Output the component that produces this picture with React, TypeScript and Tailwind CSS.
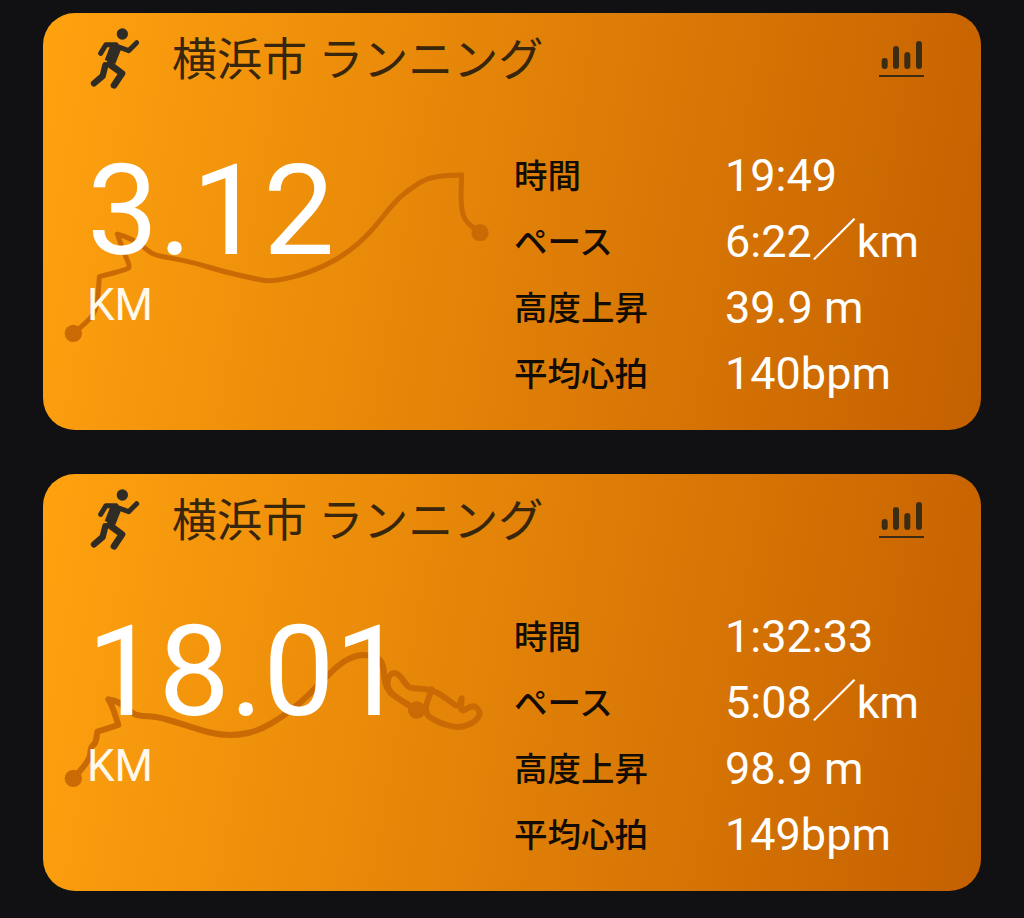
const jp = "font-['Roboto','Noto_Sans_CJK_JP',sans-serif]";

type P = [number, number];

const route1: P[] = [
  [100, 970], [150, 930], [172, 890], [178, 800], [178, 800], [262, 778], [270, 770], [255, 735], [240, 695], [232, 672], [232, 672], [270, 685], [310, 710], [340, 735], [400, 745], [470, 760], [550, 785], [640, 805], [690, 815], [770, 800], [850, 770], [920, 730], [990, 670], [1060, 580], [1105, 540], [1160, 505], [1210, 497], [1265, 495], [1265, 495], [1262, 570], [1270, 630], [1320, 668],
];
const route2: P[] = [
  [100, 535], [150, 482], [152, 440], [167, 430], [172, 395], [172, 395], [235, 375], [235, 375], [218, 322], [205, 298], [205, 298], [235, 305], [272, 335], [292, 348], [350, 350], [420, 370], [480, 390], [540, 405], [600, 405], [660, 390], [720, 355], [780, 310], [840, 250], [900, 190], [950, 165], [990, 165], [1030, 180], [1035, 270], [1090, 305], [1130, 330], [1040, 275], [1045, 225], [1070, 215], [1100, 255], [1110, 265], [1175, 268], [1220, 295], [1255, 325], [1265, 295], [1265, 295], [1262, 340], [1300, 312], [1325, 340], [1300, 370], [1250, 385], [1190, 365], [1150, 338], [1175, 268],
];

function smooth(p: P[]) {
  let d = `M${p[0][0]} ${p[0][1]}`;
  for (let i = 1; i < p.length - 1; i++) {
    const mx = (p[i][0] + p[i + 1][0]) / 2;
    const my = (p[i][1] + p[i + 1][1]) / 2;
    d += ` Q${p[i][0]} ${p[i][1]} ${mx} ${my}`;
  }
  const l = p[p.length - 1];
  return d + ` L${l[0]} ${l[1]}`;
}

function Runner() {
  return (
    <svg width="70" height="75" viewBox="0 0 210 225" fill="none" stroke="#2f2b25" strokeLinecap="round" strokeLinejoin="round" className="mt-[-3px]">
      <circle cx="127" cy="42" r="17" fill="#2f2b25" stroke="none" />
      <path d="M108 78 L146 92 L170 68" strokeWidth="15" />
      <path d="M108 74 L78 74 L62 100" strokeWidth="15" />
      <path d="M108 80 L90 126" strokeWidth="34" strokeLinecap="butt" />
      <path d="M88 132 L126 160 L102 196" strokeWidth="20" />
      <path d="M76 136 L68 168 L42 190" strokeWidth="19" />
    </svg>
  );
}

function Bars() {
  return (
    <svg width="45" height="36" viewBox="0 0 45 36" fill="#3d2c14">
      <rect x="2.7" y="17" width="6" height="11" rx="3" />
      <rect x="14" y="5" width="6" height="23" rx="3" />
      <rect x="25.3" y="11" width="6" height="17" rx="3" />
      <rect x="37" y="0" width="6" height="28" rx="3" />
      <rect x="0" y="34" width="45" height="2.6" />
    </svg>
  );
}

function Card({
  distance,
  pts,
  viewBox,
  svgW,
  svgH,
  svgTop,
  end,
  stroke,
  stats,
}: {
  distance: string;
  pts: P[];
  viewBox: string;
  svgW: number;
  svgH: number;
  svgTop: number;
  end: P;
  stroke: number;
  stats: [string, string][];
}) {
  return (
    <div className="relative h-[417px] w-[938px] overflow-hidden rounded-[32px] bg-[linear-gradient(100deg,#ffa20f,#c46000)]">
      <svg
        className="absolute left-[-3px]"
        style={{ top: svgTop, width: svgW, height: svgH }}
        viewBox={viewBox}
      >
        <path d={smooth(pts)} fill="none" stroke="#c96a05" strokeWidth={stroke} strokeLinejoin="round" strokeLinecap="round" />
        <circle cx={pts[0][0]} cy={pts[0][1]} r="26" fill="#c96a05" />
        <circle cx={end[0]} cy={end[1]} r="26" fill="#c96a05" />
      </svg>
      <div className="relative flex h-[92px] items-center pl-[37px] pr-[57px]">
        <Runner />
        <div className={`${jp} ml-[22px] mt-[3px] flex-1 text-[45px] leading-none text-[#38260c]`}>横浜市 ランニング</div>
        <Bars />
      </div>
      <div className="relative flex">
        <div className="w-[471px] pl-[44px]">
          <div className="mt-[36px] font-['Roboto',sans-serif] text-[127px] leading-[140px] font-normal text-white">{distance}</div>
          <div className="mt-0 font-['Roboto',sans-serif] text-[44px] leading-[48px] text-[#fff8ec]">KM</div>
        </div>
        <div className="mt-[39px] flex flex-col">
          {stats.map(([k, v]) => (
            <div key={k} className="flex h-[66px] items-center">
              <div className={`${jp} w-[211px] text-[33.5px] leading-none font-medium text-[#120c04]`}>{k}</div>
              <div className={`${jp} mt-[-3px] text-[45px] leading-none text-white`}>{v}</div>
            </div>
          ))}
        </div>
      </div>
    </div>
  );
}

export default function App() {
  return (
    <div className="flex h-[918px] w-[1024px] flex-col items-center gap-[44px] overflow-hidden bg-[#111114] pt-[13px]">
      <Card
        distance="3.12"
        pts={route1}
        viewBox="0 0 1560 1050"
        svgW={520}
        svgH={350}
        svgTop={-3}
        end={route1[route1.length - 1]}
        stroke={15}
        stats={[
          ["時間", "19:49"],
          ["ペース", "6:22／km"],
          ["高度上昇", "39.9 m"],
          ["平均心拍", "140bpm"],
        ]}
      />
      <Card
        distance="18.01"
        pts={route2}
        viewBox="0 0 1380 630"
        svgW={460}
        svgH={210}
        svgTop={126}
        end={[1130, 330]}
        stroke={18}
        stats={[
          ["時間", "1:32:33"],
          ["ペース", "5:08／km"],
          ["高度上昇", "98.9 m"],
          ["平均心拍", "149bpm"],
        ]}
      />
    </div>
  );
}
